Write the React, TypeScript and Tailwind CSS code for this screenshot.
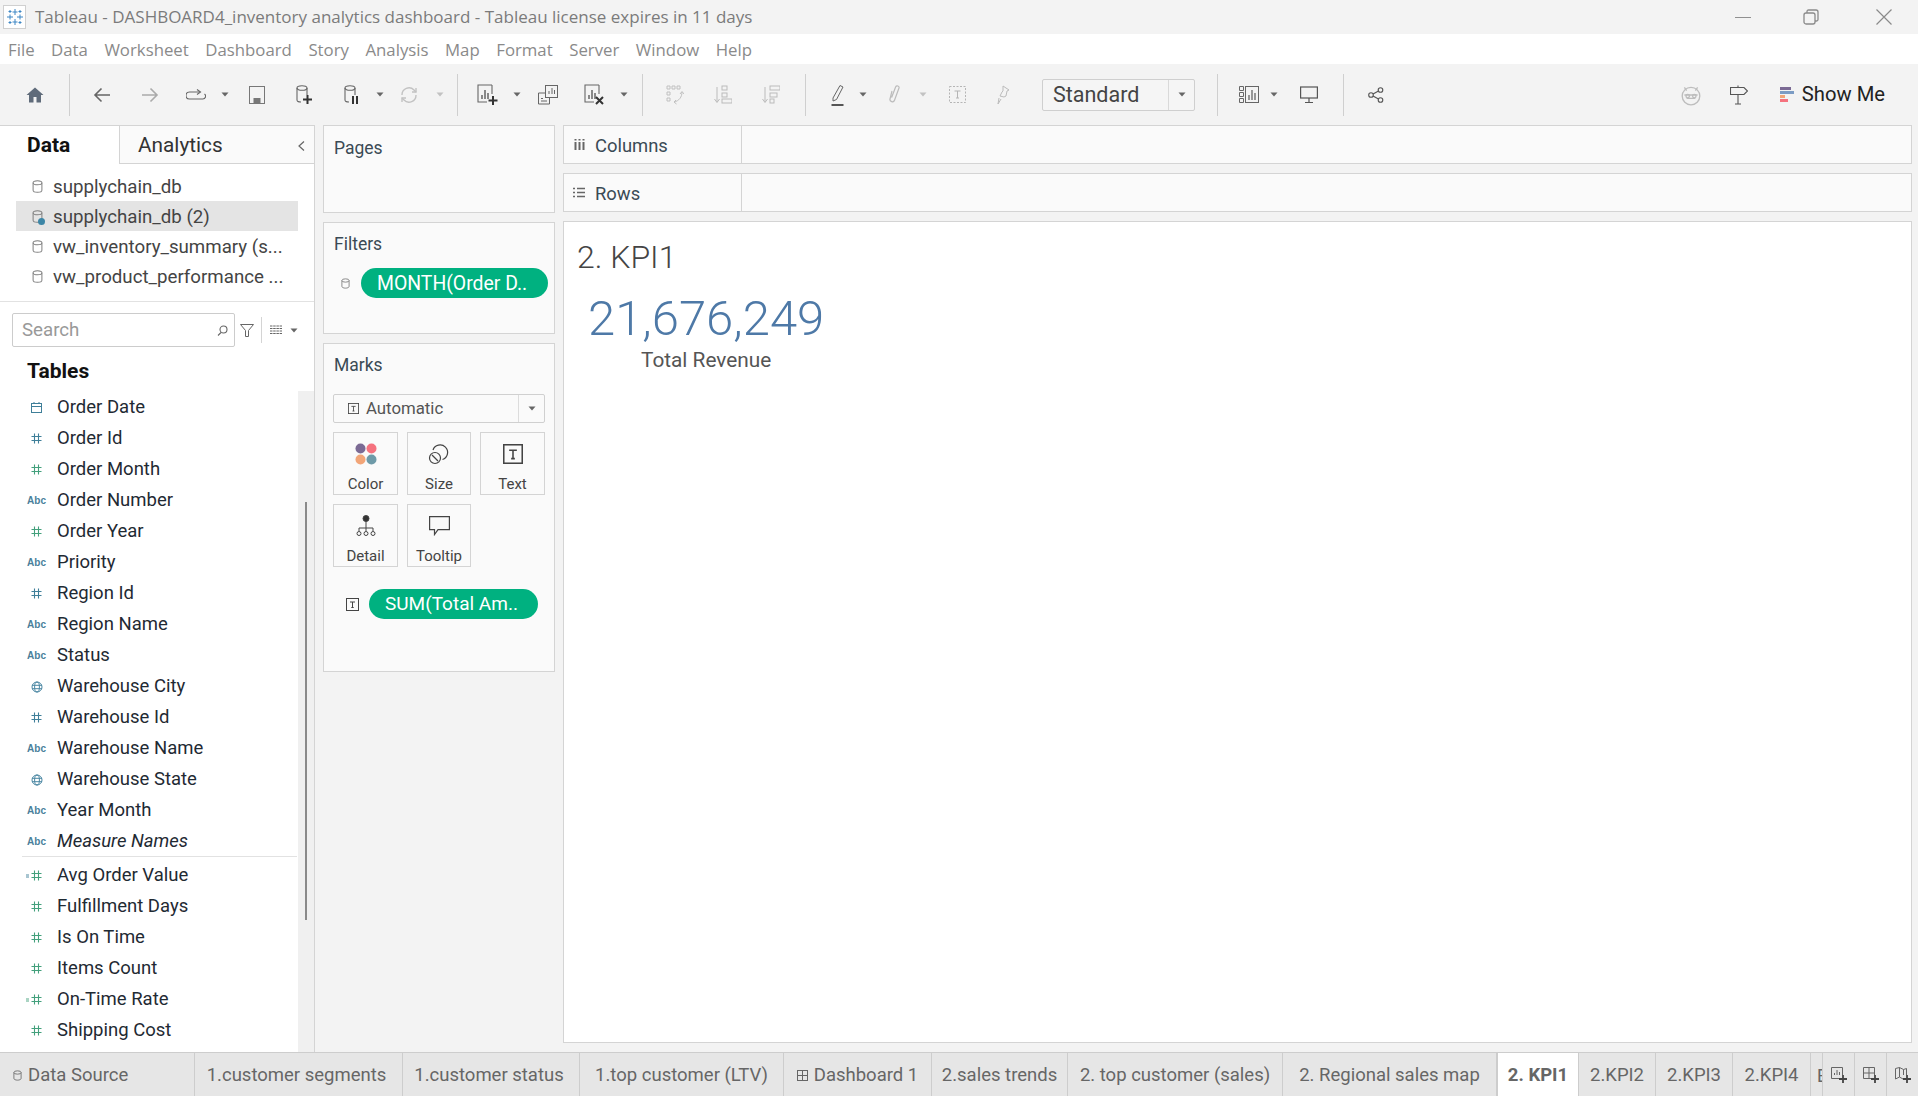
import React from 'react';

const Caret = ({ c = '#666', ml }: any) => (
  <div className={`w-[8px] flex justify-center ${ml}`}><svg width="8" height="5" viewBox="0 0 8 5" className="block"><path d="M0.500 0.500h7L4 4.500z" fill={c} /></svg></div>
);
const Sep = ({ ml }: any) => <div className={`w-px h-[42px] bg-[#cfcfcf] ${ml}`} />;
const Ic = ({ ml, children }: any) => <div className={`w-[24px] h-[24px] flex items-center justify-center shrink-0 ${ml}`}>{children}</div>;

const Db = ({ c = '#777', w = 12, h = 14 }: any) => (
  <svg width={w} height={h} viewBox="0 0 12 14" fill="none" stroke={c} strokeWidth="1.100" className="block shrink-0">
    <ellipse cx="6" cy="3" rx="4.800" ry="2.200" />
    <path d="M1.200 3v8c0 1.200 2.200 2.200 4.800 2.200s4.800-1 4.800-2.200V3" />
  </svg>
);
const Hash = ({ c }: any) => (
  <svg width="11" height="11" viewBox="0 0 11 11" fill="none" stroke={c} strokeWidth="1.100" className="block">
    <path d="M3.500 0.500v10M7.500 0.500v10M0.500 3.500h10M0.500 7.500h10" />
  </svg>
);
const Globe = () => (
  <svg width="12" height="12" viewBox="0 0 12 12" fill="none" stroke="#4a87a3" strokeWidth="1" className="block">
    <circle cx="6" cy="6" r="5" /><ellipse cx="6" cy="6" rx="2.400" ry="5" /><path d="M1 4.300h10M1 7.700h10" />
  </svg>
);
const TBox = ({ s = 13, c = '#444' }: any) => (
  <svg width={s} height={s} viewBox="0 0 13 13" fill="none" stroke={c} strokeWidth="1" className="block">
    <rect x="0.500" y="0.500" width="12" height="12" /><path d="M4 4h5M6.500 4v5.500M5.300 9.500h2.400" />
  </svg>
);

const FieldIcon = ({ t }: any) => {
  const B = '#3f7f99', G = '#43a07c';
  if (t === 'abc') return <span className="text-[10px] font-bold font-['Liberation_Sans',sans-serif] text-[#4a7f9b] leading-none">Abc</span>;
  if (t === 'hb') return <Hash c={B} />;
  if (t === 'hg') return <Hash c={G} />;
  if (t === 'glob') return <Globe />;
  if (t === 'cal') return (
    <svg width="11" height="11" viewBox="0 0 11 11" fill="none" stroke={B} strokeWidth="1" className="block">
      <rect x="0.500" y="1.500" width="10" height="9" /><path d="M0.500 4.500h10M3 0v2M8 0v2" />
    </svg>
  );
  return (
    <div className="flex items-center gap-[1px] -ml-[5px]">
      <svg width="4" height="4" viewBox="0 0 4 4" className="block"><path d="M0 1h3M0 3h3" stroke={t === 'cg' ? G : B} strokeWidth="0.900" /></svg>
      <Hash c={G} />
    </div>
  );
};

const Field = ({ t, n, i, dim }: any) => (
  <div className={`h-[31px] flex items-center shrink-0 ${dim ? 'pt-[2px]' : ''}`}>
    <div className="w-[57px] flex justify-center pl-[17px]"><div className="w-[24px] flex justify-center -ml-[1px]"><FieldIcon t={t} /></div></div>
    <span className={`text-[18.500px] text-[#1f2a33] ${i ? 'italic' : ''}`}>{n}</span>
  </div>
);

const dims = [
  ['cal', 'Order Date'], ['hb', 'Order Id'], ['hg', 'Order Month'], ['abc', 'Order Number'], ['hg', 'Order Year'],
  ['abc', 'Priority'], ['hb', 'Region Id'], ['abc', 'Region Name'], ['abc', 'Status'], ['glob', 'Warehouse City'],
  ['hb', 'Warehouse Id'], ['abc', 'Warehouse Name'], ['glob', 'Warehouse State'], ['abc', 'Year Month'],
];
const meas = [
  ['c', 'Avg Order Value'], ['hg', 'Fulfillment Days'], ['hg', 'Is On Time'], ['hg', 'Items Count'], ['cg', 'On-Time Rate'], ['hg', 'Shipping Cost'],
];

const Tab = ({ w, a, children }: any) => (
  <div className={`h-full shrink-0 pt-[2px] border-r border-[#cdcdcd] flex items-center justify-center text-[18.500px] whitespace-nowrap overflow-hidden text-[#666] ${w} ${a ? 'bg-white font-bold border-l' : ''}`}>{children}</div>
);

const MarkCard = ({ w, label, children }: any) => (
  <div className={`h-[63px] border border-[#d4d4d4] flex flex-col items-center pt-[8px] ${w}`}>
    <div className="h-[26px] flex items-center justify-center">{children}</div>
    <div className="text-[15px] text-[#444] mt-[8px] leading-[18px]">{label}</div>
  </div>
);

const Source = ({ n, sel }: any) => (
  <div className={`h-[30px] flex items-center ml-[16px] w-[282px] ${sel ? 'bg-[#e4e4e4]' : ''}`}>
    <div className="relative ml-[16px] mr-[10px] w-[11px]">
      <Db c="#808080" w={11} h={13} />
      {sel && <div className="absolute -right-[2px] -bottom-[2px] w-[7px] h-[7px] rounded-full bg-[#3d86a6]" />}
    </div>
    <span className="text-[18.700px] text-[#444] whitespace-nowrap pt-[2px]">{n}</span>
  </div>
);

export default function App() {
  return (
    <div className="w-[1918px] h-[1096px] overflow-hidden flex flex-col bg-[#f3f3f3] font-['Roboto',sans-serif]">
      {/* title */}
      <div className="h-[34px] shrink-0 flex items-center font-['Open_Sans',sans-serif]">
        <div className="ml-[3px] w-[23px] h-[24px] bg-white border border-[#d0d0d0] flex items-center justify-center">
          <svg width="18" height="18" viewBox="0 0 18 18" stroke="#3c86c4" strokeWidth="1" className="block">
            <path d="M9 1v6M6.500 4h5M9 11v6M6.500 14h5M1 9h6M4 6.500v5M11 9h6M14 6.500v5M4 2v3M2.500 3.500h3M14 2v3M12.500 3.500h3M4 13v3M2.500 14.500h3M14 13v3M12.500 14.500h3" />
          </svg>
        </div>
        <div className="ml-[9px] text-[17px] text-[#7b7b7b] whitespace-nowrap">Tableau - DASHBOARD4_inventory analytics dashboard - Tableau license expires in 11 days</div>
        <div className="flex-1" />
        <div className="w-[16px] h-px bg-[#909090] mr-[52px]" />
        <svg width="16" height="16" viewBox="0 0 16 16" fill="none" stroke="#8a8a8a" strokeWidth="1.300" className="block mr-[57px]">
          <rect x="1" y="4" width="11" height="11" rx="2" /><path d="M4 4V2.500C4 1.600 4.600 1 5.500 1H13c1.100 0 2 .9 2 2v7.500c0 .9-.6 1.500-1.500 1.500H12" />
        </svg>
        <svg width="16" height="16" viewBox="0 0 16 16" stroke="#8a8a8a" strokeWidth="1.200" className="block mr-[26px]"><path d="M0.500 0.500l15 15M15.500 0.500l-15 15" /></svg>
      </div>
      {/* menu */}
      <div className="h-[30px] shrink-0 bg-white flex items-center pl-[8px] pt-[2px] gap-[16.500px] text-[16.800px] text-[#8a8a8a] font-['Open_Sans',sans-serif]">
        {['File', 'Data', 'Worksheet', 'Dashboard', 'Story', 'Analysis', 'Map', 'Format', 'Server', 'Window', 'Help'].map(m => <span key={m}>{m}</span>)}
      </div>
      {/* toolbar */}
      <div className="h-[61px] shrink-0 flex items-center">
        <Ic ml="ml-[23px]"><svg width="18" height="16" viewBox="0 0 18 16" className="block"><path d="M9 0.500L0.500 8H3v7.500h4.500V10h3v5.500H15V8h2.500z" fill="#5f6b7a" /></svg></Ic>
        <Sep ml="ml-[22px]" />
        <Ic ml="ml-[20px]"><svg width="18" height="16" viewBox="0 0 18 16" fill="none" stroke="#666" strokeWidth="1.600" className="block"><path d="M17 8H2M8.500 1.500L2 8l6.500 6.500" /></svg></Ic>
        <Ic ml="ml-[24px]"><svg width="18" height="16" viewBox="0 0 18 16" fill="none" stroke="#aaa" strokeWidth="1.600" className="block"><path d="M1 8h15M9.500 1.500L16 8l-6.500 6.500" /></svg></Ic>
        <Ic ml="ml-[22px]"><svg width="20" height="12" viewBox="0 0 20 12" fill="none" stroke="#666" strokeWidth="1.100" className="block"><path d="M14 3H3.500a2.800 2.800 0 0 0 0 7H16.500a2.800 2.800 0 0 0 2-5" /><path d="M11 0.500L14.500 3 11 5.500" /></svg></Ic>
        <Caret ml="ml-[13px]" />
        <Ic ml="ml-[16px]"><svg width="16" height="18" viewBox="0 0 16 18" fill="none" stroke="#777" strokeWidth="1" className="block"><rect x="0.500" y="0.500" width="15" height="17" /><rect x="5" y="12.500" width="6" height="5" fill="#777" /></svg></Ic>
        <Ic ml="ml-[23px]"><svg width="16" height="20" viewBox="0 0 16 20" fill="none" stroke="#666" strokeWidth="1.100" className="block"><ellipse cx="6" cy="3" rx="5" ry="2.300" /><path d="M1 3v12c0 1 1.500 2 4 2M11 3v7" /><path d="M11.500 10v9M7 14.500h9" stroke="#333" strokeWidth="2" /></svg></Ic>
        <Ic ml="ml-[24px]"><svg width="16" height="20" viewBox="0 0 16 20" fill="none" stroke="#666" strokeWidth="1.100" className="block"><ellipse cx="6" cy="3" rx="5" ry="2.300" /><path d="M1 3v12c0 1 1.500 2 4 2M11 3v7" /><path d="M9 11v8M13 11v8" stroke="#333" strokeWidth="2" /></svg></Ic>
        <Caret ml="ml-[12px]" />
        <Ic ml="ml-[13px]"><svg width="18" height="18" viewBox="0 0 18 18" fill="none" stroke="#c2c2c2" strokeWidth="1.400" className="block"><path d="M2 9a7 7 0 0 1 12-5l2 2M16 9a7 7 0 0 1-12 5l-2-2" /><path d="M16 2v4h-4M2 16v-4h4" /></svg></Ic>
        <Caret ml="ml-[15px]" c="#c2c2c2" />
        <Sep ml="ml-[13px]" />
        <Ic ml="ml-[18px]"><svg width="22" height="22" viewBox="0 0 22 22" fill="none" stroke="#666" strokeWidth="1.100" className="block"><path d="M15 1H1v17h9M15 1v9" /><path d="M5 15v-4M8 15V6M11 15V9" strokeWidth="1.500" /><path d="M16 12v9M11.500 16.500h9" stroke="#333" strokeWidth="2" /></svg></Ic>
        <Caret ml="ml-[13px]" />
        <Ic ml="ml-[15px]"><svg width="20" height="20" viewBox="0 0 20 20" fill="none" stroke="#666" strokeWidth="1" className="block"><rect x="7.500" y="0.500" width="12" height="12" /><path d="M11 9V6M14 9V3M16.500 9V5" /><path d="M7 8H0.500v11h11v-6" /><path d="M3 16h6M3 13.500h2" /></svg></Ic>
        <Ic ml="ml-[23px]"><svg width="22" height="22" viewBox="0 0 22 22" fill="none" stroke="#666" strokeWidth="1.100" className="block"><path d="M15 1H1v17h9M15 1v9" /><path d="M5 15v-4M8 15V6M11 15V9" strokeWidth="1.500" /><path d="M12 13l7 7M19 13l-7 7" stroke="#333" strokeWidth="2" /></svg></Ic>
        <Caret ml="ml-[13px]" />
        <Sep ml="ml-[14px]" />
        <Ic ml="ml-[20px]"><svg width="18" height="20" viewBox="0 0 18 20" fill="none" stroke="#c0c0c0" strokeWidth="1" className="block"><path d="M1 1h3v3H1zM6 1h3v3H6zM11 1h3v3h-3zM1 7h3v3H1zM1 13h3v3H1z" /><path d="M16 7c0 5-3 9-8 10M14 9l2-2.500L18 9M10 15l-2 2 2.500 2" /></svg></Ic>
        <Ic ml="ml-[24px]"><svg width="18" height="20" viewBox="0 0 18 20" fill="none" stroke="#bbb" strokeWidth="1" className="block"><path d="M3 2v15M0.500 14L3 17.500 5.500 14" /><rect x="8" y="1" width="5" height="4" /><rect x="8" y="8" width="5" height="4" /><rect x="8" y="14" width="10" height="4" /></svg></Ic>
        <Ic ml="ml-[24px]"><svg width="18" height="20" viewBox="0 0 18 20" fill="none" stroke="#bbb" strokeWidth="1" className="block"><path d="M3 2v15M0.500 14L3 17.500 5.500 14" /><rect x="8" y="1" width="10" height="4" /><rect x="8" y="8" width="7" height="4" /><rect x="8" y="14" width="4" height="4" /></svg></Ic>
        <Sep ml="ml-[22px]" />
        <Ic ml="ml-[20px]"><svg width="14" height="22" viewBox="0 0 14 22" fill="none" stroke="#666" strokeWidth="1" className="block"><path d="M2 14L9 1.500l3 1.500L5.500 15.500 2 17z" /><path d="M0.500 21h12" stroke="#555" strokeWidth="2" /></svg></Ic>
        <Caret ml="ml-[9px]" />
        <Ic ml="ml-[16px]"><svg width="14" height="20" viewBox="0 0 14 20" fill="none" stroke="#bbb" strokeWidth="1.200" className="block"><path d="M4 6L2 14c-.6 2.500 3.500 4 4.500 1.300L11 3c.7-2-2.500-3-3.400-1L3.600 12.500" /></svg></Ic>
        <Caret ml="ml-[12px]" c="#c2c2c2" />
        <Ic ml="ml-[18px]"><svg width="17" height="17" viewBox="0 0 17 17" fill="none" stroke="#b5b5b5" strokeWidth="1" className="block"><rect x="0.500" y="0.500" width="16" height="16" strokeDasharray="2 1.500" /><path d="M5.500 5h6M8.500 5v7M7 12h3" /></svg></Ic>
        <Ic ml="ml-[22px]"><svg width="14" height="20" viewBox="0 0 14 20" fill="none" stroke="#bbb" strokeWidth="1" className="block"><path d="M7 1l6 4-2 1-1 5-2 1-4-1 2-4 1-1zM3 13l-1 6 3-5" /></svg></Ic>
        <div className="ml-[27px] w-[153px] h-[32px] border border-[#cfcfcf] rounded-[2px] flex items-center shrink-0 bg-[#f5f5f5]">
          <div className="w-[125px] pl-[10px] pt-[2px] text-[21.500px] text-[#444]">Standard</div>
          <div className="w-px h-full bg-[#d9d9d9]" />
          <div className="flex-1 flex justify-center"><Caret /></div>
        </div>
        <Sep ml="ml-[22px]" />
        <Ic ml="ml-[19px]"><svg width="20" height="17" viewBox="0 0 20 17" fill="none" stroke="#666" strokeWidth="1" className="block"><path d="M0.500 0.500h4v4h-4zM0.500 6.500h4v4h-4zM0.500 12.500h4v4h-4z" /><rect x="6.500" y="0.500" width="13" height="16" /><path d="M10 14V9M13 14V4M16 14V7" strokeWidth="1.300" /></svg></Ic>
        <Caret ml="ml-[9px]" />
        <Ic ml="ml-[19px]"><svg width="18" height="18" viewBox="0 0 18 18" fill="none" stroke="#555" strokeWidth="1.200" className="block"><rect x="0.600" y="1" width="16.800" height="11" /><path d="M9 12v4M5 16.500h8" /></svg></Ic>
        <Sep ml="ml-[22px]" />
        <Ic ml="ml-[20px]"><svg width="16" height="16" viewBox="0 0 16 16" fill="none" stroke="#555" strokeWidth="1.100" className="block"><circle cx="3" cy="8" r="2.300" /><circle cx="12.500" cy="3" r="2.300" /><circle cx="12.500" cy="13" r="2.300" /><path d="M5 7l5.500-3M5 9l5.500 3" /></svg></Ic>
        <div className="flex-1" />
        <svg width="22" height="22" viewBox="0 0 20 20" fill="none" stroke="#bdbdbd" strokeWidth="1.200" className="block mr-[28px]"><circle cx="10" cy="11" r="8" /><path d="M4 3l2 3M16 3l-2 3M4 10h12M6 13h8" /><circle cx="7" cy="11" r="1.600" /><circle cx="13" cy="11" r="1.600" /></svg>
        <svg width="18" height="20" viewBox="0 0 18 20" fill="none" stroke="#555" strokeWidth="1.100" className="block mr-[32px]"><path d="M0.500 2.500H14l3.500 3.500-3.500 3.500H0.500zM8 0.500v2M8 9.500v9.500M5 19h6" /></svg>
        <div className="w-[14px] flex flex-col gap-[1px] mr-[8px]">
          <div className="h-[3px] w-[11px] bg-[#7b6a94]" /><div className="h-[3px] w-[14px] bg-[#7c9cc4]" /><div className="h-[3px] w-[5px] bg-[#f2a578]" /><div className="h-[3px] w-[8px] bg-[#f5727e]" />
        </div>
        <div className="text-[20.200px] text-[#222] mr-[33px] whitespace-nowrap">Show Me</div>
      </div>

      {/* main */}
      <div className="flex-1 min-h-0 flex">
        {/* left */}
        <div className="w-[315px] shrink-0 bg-white border-t border-r border-[#d4d4d4] flex flex-col overflow-hidden">
          <div className="h-[38px] shrink-0 flex">
            <div className="w-[119px] flex items-center pl-[27px] pt-[2px] text-[21px] font-bold text-[#111]">Data</div>
            <div className="flex-1 bg-[#fafafa] border-l border-b border-[#d4d4d4] flex items-center pl-[18px] pt-[2px] text-[20.800px] text-[#333]">
              Analytics
              <div className="flex-1" />
              <svg width="7" height="10" viewBox="0 0 7 10" fill="none" stroke="#666" strokeWidth="1.200" className="block mr-[9px]"><path d="M6 0.500L1 5l5 4.500" /></svg>
            </div>
          </div>
          <div className="pt-[7px] h-[138px] shrink-0 border-b border-[#e2e2e2]">
            <Source n="supplychain_db" />
            <Source n="supplychain_db (2)" sel />
            <Source n="vw_inventory_summary (s..." />
            <Source n="vw_product_performance ..." />
          </div>
          <div className="h-[45px] shrink-0 flex items-end">
            <div className="ml-[12px] w-[223px] h-[34px] border border-[#ccc] rounded-[2px] flex items-center pl-[9px] pr-[6px] text-[18.700px] text-[#999]">
              Search
              <div className="flex-1" />
              <svg width="11" height="11" viewBox="0 0 11 11" fill="none" stroke="#666" strokeWidth="1.100" className="block"><circle cx="6.500" cy="4.500" r="3.500" /><path d="M4 7.500L1 10.500" /></svg>
            </div>
            <div className="h-[34px] flex items-center">
              <svg width="14" height="13" viewBox="0 0 14 13" fill="none" stroke="#666" strokeWidth="1" className="block ml-[5px]"><path d="M0.500 0.500h13L8.500 6.500v6h-3v-6z" /></svg>
              <div className="ml-[7px] w-px h-[26px] bg-[#d4d4d4]" />
              <svg width="12" height="10" viewBox="0 0 12 10" stroke="#666" strokeWidth="1" strokeDasharray="2.500 0.700" className="block ml-[8px]"><path d="M0 1h12M0 3.500h12M0 6h12M0 8.500h12" /></svg>
              <div className="ml-[8px]"><Caret /></div>
            </div>
          </div>
          <div className="h-[44px] shrink-0 pt-[4px] pl-[27px] text-[21px] font-bold text-[#111] leading-[40px]">Tables</div>
          <div className="flex-1 min-h-0 flex">
            <div className="w-[298px] shrink-0 flex flex-col overflow-hidden">
              {dims.map(d => <Field key={d[1]} t={d[0]} n={d[1]} dim />)}
              <Field t="abc" n="Measure Names" i dim />
              <div className="h-px bg-[#e2e2e2] ml-[22px] mr-[1px] shrink-0" />
              <div className="h-[3px] shrink-0" />
              {meas.map(d => <Field key={d[1]} t={d[0]} n={d[1]} />)}
            </div>
            <div className="flex-1 bg-[#f0f0f0] pl-[7px] pt-[111px]"><div className="w-[2px] h-[418px] bg-[#8a8a8a]" /></div>
          </div>
        </div>

        {/* cards */}
        <div className="w-[232px] shrink-0 ml-[8px] flex flex-col gap-[9px] text-[#3a4a55]">
          <div className="h-[88px] bg-[#fafafa] border border-[#d4d4d4] pl-[10px] pt-[10px] text-[17.500px] leading-[24px]">Pages</div>
          <div className="h-[112px] bg-[#fafafa] border border-[#d4d4d4] pt-[9px]">
            <div className="pl-[10px] text-[17.500px] leading-[24px]">Filters</div>
            <div className="mt-[12px] flex items-center">
              <div className="ml-[17px]"><Db c="#777" w={9} h={11} /></div>
              <div className="ml-[11px] w-[187px] h-[30px] pt-[2px] rounded-full bg-[#00b180] text-white text-[19.400px] flex items-center pl-[16px] whitespace-nowrap">MONTH(Order D..</div>
            </div>
          </div>
          <div className="h-[329px] bg-[#fafafa] border border-[#d4d4d4] pt-[9px] pl-[9px]">
            <div className="pl-[1px] text-[17.500px] leading-[24px]">Marks</div>
            <div className="mt-[17px] w-[212px] h-[29px] border border-[#d0d0d0] rounded-[2px] flex items-center">
              <div className="ml-[14px]"><TBox s={11} /></div>
              <span className="ml-[7px] text-[16.800px] text-[#555] w-[152px]">Automatic</span>
              <div className="w-px h-full bg-[#dcdcdc]" />
              <div className="flex-1 flex justify-center"><Caret /></div>
            </div>
            <div className="mt-[9px] flex gap-[9px]">
              <MarkCard w="w-[65px]" label="Color">
                <svg width="22" height="22" viewBox="0 0 22 22" className="block"><circle cx="5.500" cy="5.500" r="5" fill="#7b6a94" /><circle cx="16.500" cy="5.500" r="5" fill="#f5727e" /><circle cx="5.500" cy="16.500" r="5" fill="#f2a578" /><circle cx="16.500" cy="16.500" r="5" fill="#6e9aa8" /></svg>
              </MarkCard>
              <MarkCard w="w-[64px]" label="Size">
                <svg width="22" height="22" viewBox="0 0 22 22" fill="none" stroke="#444" strokeWidth="1.200" className="block"><path d="M5 7a7.500 7.500 0 1 1 9.500 9.500" /><circle cx="7" cy="15" r="5.500" /><path d="M4 12l6 6" /></svg>
              </MarkCard>
              <MarkCard w="w-[65px]" label="Text"><TBox s={20} /></MarkCard>
            </div>
            <div className="mt-[9px] flex gap-[9px]">
              <MarkCard w="w-[65px]" label="Detail">
                <svg width="20" height="22" viewBox="0 0 20 22" fill="none" stroke="#444" strokeWidth="1" className="block"><circle cx="10" cy="3.500" r="3" fill="#333" /><path d="M10 6v10M3 16v-3h14v3" /><circle cx="3" cy="18.500" r="2" /><circle cx="10" cy="18.500" r="2" /><circle cx="17" cy="18.500" r="2" /></svg>
              </MarkCard>
              <MarkCard w="w-[64px]" label="Tooltip">
                <svg width="21" height="20" viewBox="0 0 21 20" fill="none" stroke="#444" strokeWidth="1.200" className="block"><path d="M0.600 0.600h19.800v13H9L5.500 18.500V13.600H0.600z" /></svg>
              </MarkCard>
            </div>
            <div className="mt-[22px] flex items-center">
              <div className="ml-[13px]"><TBox s={13} /></div>
              <div className="ml-[10px] w-[169px] h-[30px] pt-[1px] rounded-full bg-[#00b180] text-white text-[19px] flex items-center pl-[16px] whitespace-nowrap">SUM(Total Am..</div>
            </div>
          </div>
        </div>

        {/* right */}
        <div className="flex-1 ml-[8px] mr-[6px] flex flex-col gap-[9px] pb-[9px] min-w-0">
          <div className="h-[39px] shrink-0 bg-[#fafafa] border border-[#d4d4d4] flex items-center">
            <div className="w-[178px] h-full border-r border-[#d4d4d4] flex items-center">
              <svg width="11" height="11" viewBox="0 0 11 11" stroke="#666" strokeWidth="2" className="block ml-[10px]"><path d="M1.500 3v8M5.500 3v8M9.500 3v8M1.500 0v1.500M5.500 0v1.500M9.500 0v1.500" /></svg>
              <span className="ml-[10px] pt-[2px] text-[18.400px] text-[#3a4a55]">Columns</span>
            </div>
          </div>
          <div className="h-[39px] shrink-0 bg-[#fafafa] border border-[#d4d4d4] flex items-center">
            <div className="w-[178px] h-full border-r border-[#d4d4d4] flex items-center">
              <svg width="12" height="11" viewBox="0 0 12 11" stroke="#666" strokeWidth="1.600" className="block ml-[9px]"><path d="M0 1.500h2M4 1.500h8M0 5.500h2M4 5.500h8M0 9.500h2M4 9.500h8" /></svg>
              <span className="ml-[10px] pt-[2px] text-[18.400px] text-[#3a4a55]">Rows</span>
            </div>
          </div>
          <div className="flex-1 bg-white border border-[#d4d4d4] pl-[13px] pt-[15px] flex flex-col items-start">
            <div className="text-[32px] font-light leading-[40px] text-[#444]">2. KPI1</div>
            <div className="ml-[11px] mt-[17px] flex flex-col items-center">
              <div className="text-[49px] font-light leading-[50px] text-[#4e79a7]">21,676,249</div>
              <div className="text-[20.800px] leading-[28px] text-[#555] mt-[2px]">Total Revenue</div>
            </div>
          </div>
        </div>
      </div>

      {/* tabs */}
      <div className="h-[44px] shrink-0 bg-[#e6e6e6] border-t border-[#cdcdcd] flex">
        <div className="w-[195px] h-full shrink-0 pt-[2px] border-r border-[#cdcdcd] flex items-center pl-[13px] text-[18.500px] whitespace-nowrap text-[#666]"><Db c="#666" w={9} h={11} /><span className="ml-[6px]">Data Source</span></div>
        <Tab w="w-[208px] pr-[4px]">1.customer segments</Tab>
        <Tab w="w-[177px] pr-[4px]">1.customer status</Tab>
        <Tab w="w-[204px]">1.top customer (LTV)</Tab>
        <Tab w="w-[148px]">
          <svg width="11" height="11" viewBox="0 0 11 11" fill="none" stroke="#666" strokeWidth="1" className="block mr-[6px]"><rect x="0.500" y="0.500" width="10" height="10" /><path d="M5.500 0v11M0 5.500h11" /></svg>
          Dashboard 1
        </Tab>
        <Tab w="w-[136px]">2.sales trends</Tab>
        <Tab w="w-[215px]">2. top customer (sales)</Tab>
        <Tab w="w-[214px]">2. Regional sales map</Tab>
        <Tab w="w-[82px]" a>2. KPI1</Tab>
        <Tab w="w-[77px]">2.KPI2</Tab>
        <Tab w="w-[77px]">2.KPI3</Tab>
        <Tab w="w-[78px]">2.KPI4</Tab>
        <div className="w-[12px] shrink-0 pt-[2px] border-r border-[#cdcdcd] text-[18px] text-[#666] overflow-hidden flex items-center justify-end"><span className="w-[5px] overflow-hidden">E</span></div>
        <div className="w-[32px] shrink-0 border-r border-[#cdcdcd] flex items-center justify-center">
          <svg width="16" height="16" viewBox="0 0 16 16" fill="none" stroke="#666" strokeWidth="1" className="block"><path d="M8 11.500H0.500v-11h11V8" /><path d="M3.500 8V6M6 8V3M8.500 8V5" /><path d="M12 8v8M8 12h8" stroke="#444" strokeWidth="1.800" /></svg>
        </div>
        <div className="w-[32px] shrink-0 border-r border-[#cdcdcd] flex items-center justify-center">
          <svg width="16" height="16" viewBox="0 0 16 16" fill="none" stroke="#666" strokeWidth="1" className="block"><path d="M8 11.500H0.500v-11h11V8M0.500 6h11M6 0.500v11" /><path d="M12 8v8M8 12h8" stroke="#444" strokeWidth="1.800" /></svg>
        </div>
        <div className="w-[31px] shrink-0 flex items-center justify-center">
          <svg width="16" height="16" viewBox="0 0 16 16" fill="none" stroke="#666" strokeWidth="1" className="block"><path d="M8 12l-3.500-2-4 2V1.500l4-1 4 2 3-1V8M4.500 0.500V10M8.500 2.500V8" /><path d="M12 8v8M8 12h8" stroke="#444" strokeWidth="1.800" /></svg>
        </div>
      </div>
    </div>
  );
}
